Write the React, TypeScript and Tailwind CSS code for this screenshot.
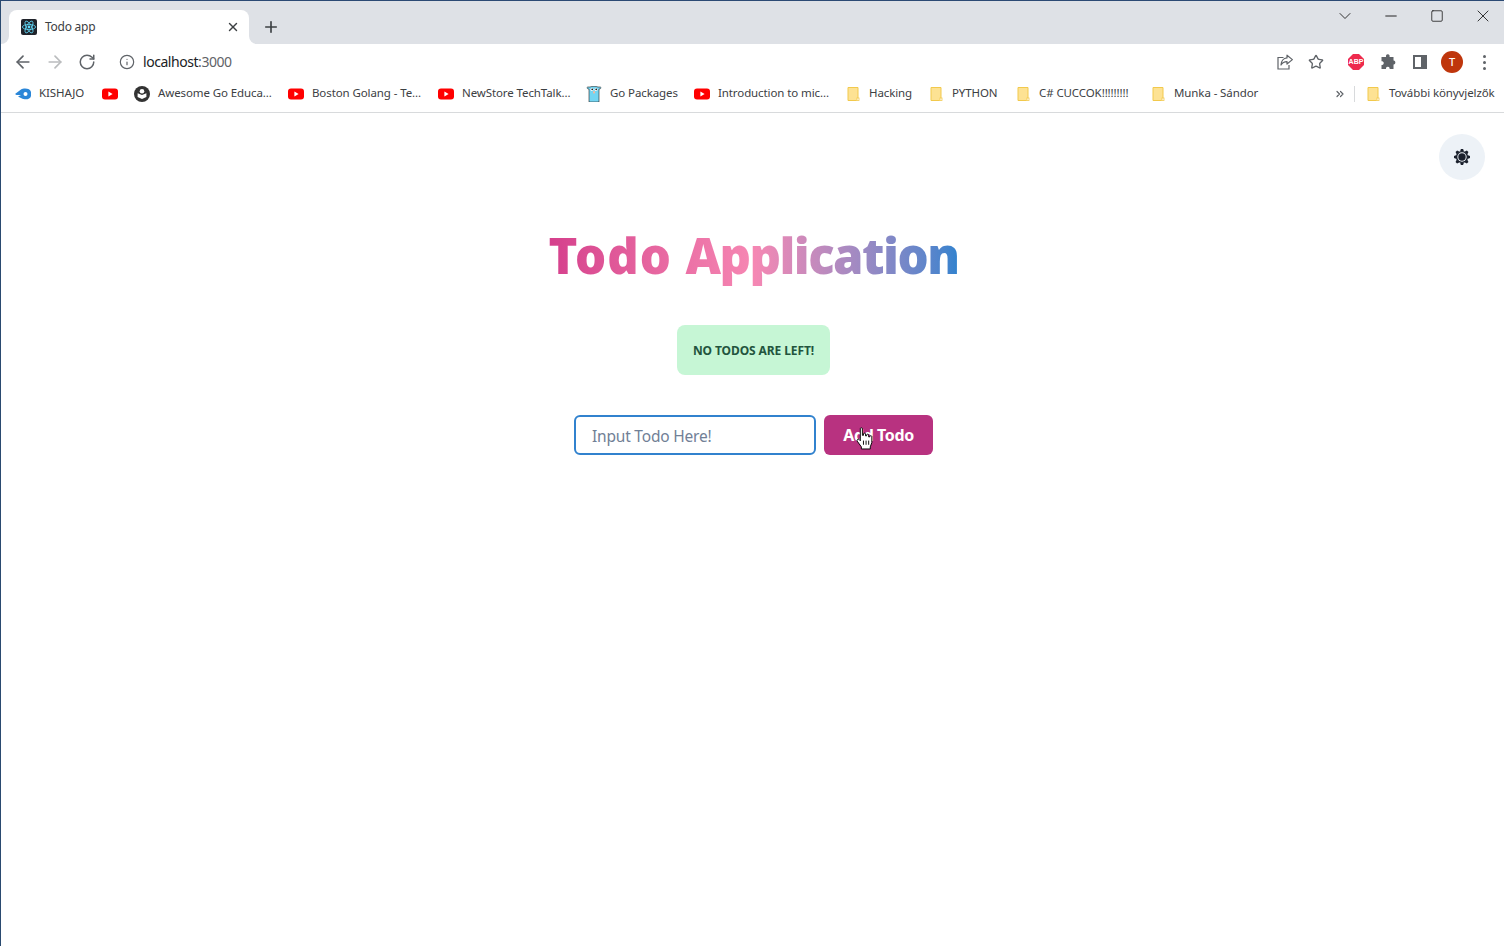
import React from "react";
import { ArrowLeft, ArrowRight, RotateCw, Info, Star, Plus, X, ChevronDown, Minus, Square, ChevronsRight } from "lucide-react";

function Yt() {
  return (
    <svg width="16" height="16" viewBox="0 0 16 16" className="shrink-0">
      <rect x="0" y="2.5" width="16" height="11" rx="3" fill="#ff0000" />
      <path d="M6.4 5.6 L10.6 8 L6.4 10.4 Z" fill="#fff" />
    </svg>
  );
}
function Folder() {
  return (
    <svg width="16" height="16" viewBox="0 0 16 16" className="shrink-0">
      <path d="M3 1.5 H13 V13 L11.5 14.5 H3 Z" fill="#fde293" stroke="#f2c94c" strokeWidth="1" />
      <rect x="12" y="12" width="2" height="2.4" fill="#fff" stroke="#f2c94c" strokeWidth="0.8" />
    </svg>
  );
}
function Kishajo() {
  return (
    <svg width="16" height="16" viewBox="0 0 16 16" className="shrink-0">
      <path d="M0 8 L6 3.6 C9 1.8 15.5 2.4 16 6 V10 C15.5 13.6 9.5 14.2 6.5 12.2 L3 10.5 L6 9 L1.5 9 Z" fill="#2a86d8" />
      <circle cx="10.5" cy="8" r="2" fill="#fff" />
    </svg>
  );
}
function GoEdu() {
  return (
    <svg width="16" height="16" viewBox="0 0 16 16" className="shrink-0">
      <circle cx="8" cy="8" r="8" fill="#333" />
      <circle cx="8" cy="5.2" r="2.3" fill="#fff" />
      <path d="M3.6 7.2 L8 9 L12.4 7.2 V11 L8 13 L3.6 11 Z" fill="#fff" />
    </svg>
  );
}
function Gopher() {
  return (
    <svg width="16" height="16" viewBox="0 0 16 16" className="shrink-0">
      <path d="M3 3 C1 3 0.6 1.6 1.6 1 H4 C6 0 10 0 12 1 H14.4 C15.4 1.6 15 3 13 3 L13 16 H3 Z" fill="#73d5f2" stroke="#222" strokeWidth="0.6" />
      <circle cx="6" cy="3.4" r="1.5" fill="#fff" />
      <circle cx="10" cy="3.4" r="1.5" fill="#fff" />
      <circle cx="6.2" cy="3.4" r="0.8" fill="#111" />
      <circle cx="10.2" cy="3.4" r="0.8" fill="#111" />
      <rect x="7" y="5" width="2" height="2.4" rx="0.6" fill="#f3b9a0" />
    </svg>
  );
}
function ReactFavicon() {
  return (
    <svg width="16" height="16" viewBox="0 0 16 16" className="shrink-0">
      <rect width="16" height="16" rx="2" fill="#20232a" />
      <g fill="none" stroke="#61dafb" strokeWidth="0.8">
        <ellipse cx="8" cy="8" rx="6.6" ry="2.6" />
        <ellipse cx="8" cy="8" rx="6.6" ry="2.6" transform="rotate(60 8 8)" />
        <ellipse cx="8" cy="8" rx="6.6" ry="2.6" transform="rotate(120 8 8)" />
      </g>
      <circle cx="8" cy="8" r="1.4" fill="#61dafb" />
    </svg>
  );
}
function Share() {
  return (
    <svg width="16" height="16" viewBox="0 0 16 16" fill="none" stroke="#5f6368" strokeWidth="1.2" className="shrink-0">
      <path d="M6.5 3.5 H1 V15 H12 V11" />
      <path d="M10 1.2 L15.4 5.6 L10 10 V7.6 C7 7.6 5.2 8.8 4 11 C4.2 7.4 6.4 4.2 10 3.9 Z" strokeLinejoin="round" />
    </svg>
  );
}
function Abp() {
  return (
    <svg width="16" height="16" viewBox="0 0 16 16" className="shrink-0">
      <path d="M5 0 H11 L16 5 V11 L11 16 H5 L0 11 V5 Z" fill="#ee2a4d" />
    </svg>
  );
}
function Puzzle() {
  return (
    <svg width="16" height="16" viewBox="0 0 16 16" fill="#5f6368" className="shrink-0">
      <path d="M6 1.5 a2 2 0 0 1 3.6 0 V3 H13.5 V6.6 H14 a2 2 0 0 1 0 3.8 H13.5 V15 H9.6 V14 a1.9 1.9 0 0 0 -3.6 0 V15 H1.5 V11 H2.4 a2 2 0 0 0 0 -3.8 H1.5 V3 H6 Z" />
    </svg>
  );
}
function Panel() {
  return (
    <svg width="14" height="14" viewBox="0 0 14 14" className="shrink-0">
      <rect x="1" y="1" width="12" height="12" fill="#fff" stroke="#5f6368" strokeWidth="2" />
      <rect x="8" y="1" width="5" height="12" fill="#5f6368" />
    </svg>
  );
}
function Sun() {
  return (
    <svg width="18" height="18" viewBox="0 0 18 18" className="shrink-0">
      {[0, 45, 90, 135, 180, 225, 270, 315].map((a) => (
        <path key={a} d="M7 3.6 L7.9 1 H10.1 L11 3.6 Z" fill="#1a202c" transform={`rotate(${a} 9 9)`} />
      ))}
      <circle cx="9" cy="9" r="6.1" fill="#1a202c" />
      <circle cx="9" cy="9" r="4.7" fill="#edf2f7" />
      <circle cx="9" cy="9" r="3.7" fill="#1a202c" />
    </svg>
  );
}
function Hand() {
  return (
    <svg width="19" height="23" viewBox="0 0 16 22" className="absolute left-[31px] top-[12px]">
      <path
        d="M4 1.5 C4 0.5 6 0.5 6 1.5 V8 H7 V6.5 C7 5.7 9 5.7 9 6.5 V8.5 H10 V7.5 C10 6.7 12 6.7 12 7.5 V9.5 H13 V9 C13 8.2 15 8.2 15 9 V15 L13.5 19 V21 H5 V19 L1 13.5 C0.4 12.4 1.8 11 3 12 L4 13.2 Z"
        fill="#fff"
        stroke="#000"
        strokeWidth="0.9"
      />
      <path d="M7 13 V17 M9.5 13 V17 M12 13 V17" stroke="#000" strokeWidth="0.9" />
    </svg>
  );
}

function Bm({ icon, label, w, cls = "" }: { icon: React.ReactNode; label: string; w: number; cls?: string }) {
  return (
    <div className={`flex items-center gap-2 ${cls}`}>
      {icon}
      <span className="whitespace-nowrap mb-[2px] tracking-[-0.1px]" style={{ width: w }}>{label}</span>
    </div>
  );
}

export default function App() {
  return (
    <div className="h-[946px] w-[1504px] overflow-hidden bg-white flex flex-col border-l border-[#2a4a70] font-['Noto_Sans',sans-serif]">
      <div className="h-px bg-[#2b4a74] shrink-0" />
      {/* Tab strip */}
      <div className="h-[43px] shrink-0 bg-[#dee1e6] flex items-end pl-2 relative">
        <div className="relative w-[240px] h-[34px] bg-white rounded-t-lg flex items-center pl-3 pr-[9px] gap-2 text-[12px] text-[#3c4043]">
          <div className="absolute -left-2 bottom-0 w-2 h-2 bg-white">
            <div className="w-2 h-2 bg-[#dee1e6] rounded-br-lg" />
          </div>
          <div className="absolute -right-2 bottom-0 w-2 h-2 bg-white">
            <div className="w-2 h-2 bg-[#dee1e6] rounded-bl-lg" />
          </div>
          <ReactFavicon />
          <span className="flex-1 tracking-[-0.25px]">Todo app</span>
          <X size={14} strokeWidth={2.4} color="#3c4043" />
        </div>
        <div className="w-11 h-[34px] flex items-center justify-center">
          <Plus size={18} strokeWidth={2.2} color="#3c4043" />
        </div>
        <div className="flex-1" />
        <div className="self-start flex items-center h-[30px] -mr-[2px]">
          <div className="w-[46px] flex justify-center"><ChevronDown size={20} strokeWidth={1.1} color="#222" /></div>
          <div className="w-[46px] flex justify-center"><Minus size={18} strokeWidth={1.2} color="#111" /></div>
          <div className="w-[46px] flex justify-center"><Square size={14} strokeWidth={1.3} color="#111" /></div>
          <div className="w-[46px] flex justify-center"><X size={20} strokeWidth={1} color="#111" /></div>
        </div>
      </div>
      {/* Toolbar */}
      <div className="h-9 shrink-0 flex items-center pl-[12px] text-[#202124]">
        <ArrowLeft size={20} strokeWidth={2} color="#5f6368" />
        <ArrowRight size={20} strokeWidth={2} color="#babcbe" className="ml-[12px]" />
        <RotateCw size={18} strokeWidth={2} color="#5f6368" className="ml-[13px]" />
        <Info size={16} strokeWidth={1.8} color="#5f6368" className="ml-[23px]" />
        <span className="ml-[8px] mb-px text-[14px] tracking-[-0.45px]">
          localhost<span className="text-[#5f6368]">:3000</span>
        </span>
        <div className="flex-1" />
        <Share />
        <Star size={16} strokeWidth={2} color="#5f6368" className="ml-[15px]" />
        <div className="relative ml-[24px]">
          <Abp />
          <span className="absolute inset-0 flex items-center justify-center text-[7px] font-bold text-white font-['Liberation_Sans',sans-serif]">ABP</span>
        </div>
        <div className="ml-[16px]"><Puzzle /></div>
        <div className="ml-[17px]"><Panel /></div>
        <div className="ml-[14px] w-[22px] h-[22px] rounded-full bg-[#bf360c] text-white text-[11px] font-medium flex items-center justify-center">T</div>
        <div className="ml-[20px] mr-[18px] flex flex-col gap-[3px]">
          <div className="w-[3px] h-[3px] rounded-full bg-[#5f6368]" />
          <div className="w-[3px] h-[3px] rounded-full bg-[#5f6368]" />
          <div className="w-[3px] h-[3px] rounded-full bg-[#5f6368]" />
        </div>
      </div>
      {/* Bookmarks */}
      <div className="h-[33px] pb-1 shrink-0 flex items-center pl-[14px] text-[11.5px] text-[#3c4043] border-b border-[#d8dadc]">
        <Bm icon={<Kishajo />} label="KISHAJO" w={47} />
        <div className="ml-4"><Yt /></div>
        <Bm icon={<GoEdu />} label="Awesome Go Educa..." w={114} cls="ml-4" />
        <Bm icon={<Yt />} label="Boston Golang - Te..." w={110} cls="ml-4" />
        <Bm icon={<Yt />} label="NewStore TechTalk..." w={108} cls="ml-4" />
        <Bm icon={<Gopher />} label="Go Packages" w={68} cls="ml-4" />
        <Bm icon={<Yt />} label="Introduction to mic..." w={111} cls="ml-4" />
        <Bm icon={<Folder />} label="Hacking" w={43} cls="ml-4" />
        <Bm icon={<Folder />} label="PYTHON" w={46} cls="ml-4" />
        <Bm icon={<Folder />} label="C# CUCCOK!!!!!!!!!" w={94} cls="ml-[17px]" />
        <Bm icon={<Folder />} label="Munka - Sándor" w={86} cls="ml-[17px]" />
        <div className="flex-1" />
        <ChevronsRight size={12} strokeWidth={2.4} color="#5f6368" />
        <div className="w-px h-4 bg-[#d8dadc] ml-[8px] mr-[10px]" />
        <Bm icon={<Folder />} label="További könyvjelzők" w={107} cls="mr-2" />
      </div>
      {/* Page */}
      <main className="flex-1 relative flex flex-col items-center pl-[2px]">
        <button className="absolute right-[19px] top-[21px] w-[46px] h-[46px] rounded-full bg-[#edf2f7] flex items-center justify-center">
          <Sun />
        </button>
        <h1 className="mt-[110px] h-[67px] leading-[64px] text-[49px] font-black whitespace-nowrap bg-gradient-to-r from-[#d53f8c] via-[#f687b3] to-[#3182ce] bg-clip-text text-transparent">
          <span className="tracking-[0.95px]">Todo </span>
          <span className="tracking-[-1.53px]">Application</span>
        </h1>
        <div className="mt-[35px] w-[153px] h-[50px] pt-px rounded-lg bg-[#c6f6d5] text-[#22543d] text-[12px] font-bold flex items-center justify-center whitespace-nowrap tracking-[-0.1px]">
          NO TODOS ARE LEFT!
        </div>
        <div className="mt-10 flex gap-2">
          <input
            readOnly
            placeholder="Input Todo Here!"
            className="w-[242px] h-10 pt-px rounded-md border-2 border-[#3182ce] px-4 text-[15.5px] tracking-[-0.2px] outline-none placeholder:text-[#718096]"
          />
          <button className="relative w-[109px] h-10 rounded-md bg-[#b83280] text-white text-[16px] font-bold tracking-[-0.4px]">
            Add Todo
            <Hand />
          </button>
        </div>
      </main>
    </div>
  );
}
